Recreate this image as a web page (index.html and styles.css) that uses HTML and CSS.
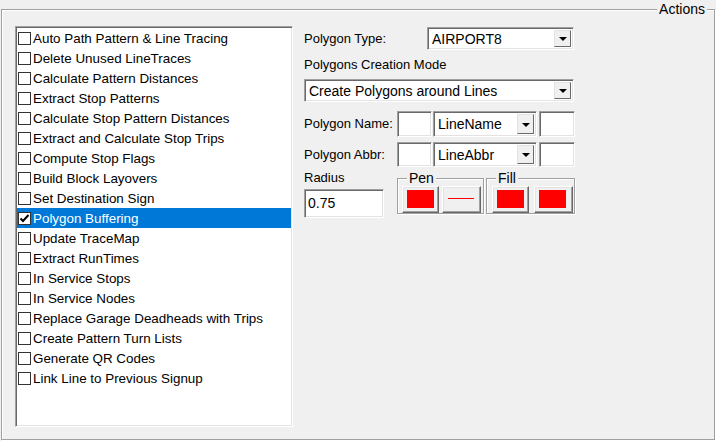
FILE: index.html
```
<!DOCTYPE html>
<html lang="en">
<head>
  <meta charset="UTF-8" />
  <title>Actions</title>
  <link rel="stylesheet" href="styles.css">
</head>
<body>

  <div class="group actions">
    <span class="group-title">Actions</span>

    <div class="listbox">
      <div class="item"><span class="check"></span>Auto Path Pattern &amp; Line Tracing</div>
      <div class="item"><span class="check"></span>Delete Unused LineTraces</div>
      <div class="item"><span class="check"></span>Calculate Pattern Distances</div>
      <div class="item"><span class="check"></span>Extract Stop Patterns</div>
      <div class="item"><span class="check"></span>Calculate Stop Pattern Distances</div>
      <div class="item"><span class="check"></span>Extract and Calculate Stop Trips</div>
      <div class="item"><span class="check"></span>Compute Stop Flags</div>
      <div class="item"><span class="check"></span>Build Block Layovers</div>
      <div class="item"><span class="check"></span>Set Destination Sign</div>
      <div class="item selected">
        <span class="check"><svg width="11" height="11" viewBox="0 0 11 11"><path d="M1.5 5.5 L4 8 L9.5 2" fill="none" stroke="#000" stroke-width="2"/></svg></span>Polygon Buffering
      </div>
      <div class="item"><span class="check"></span>Update TraceMap</div>
      <div class="item"><span class="check"></span>Extract RunTimes</div>
      <div class="item"><span class="check"></span>In Service Stops</div>
      <div class="item"><span class="check"></span>In Service Nodes</div>
      <div class="item"><span class="check"></span>Replace Garage Deadheads with Trips</div>
      <div class="item"><span class="check"></span>Create Pattern Turn Lists</div>
      <div class="item"><span class="check"></span>Generate QR Codes</div>
      <div class="item"><span class="check"></span>Link Line to Previous Signup</div>
    </div>

    <div class="panel">
      <div class="row-type">
        <span class="lbl">Polygon Type:</span>
        <div class="combo combo-type"><span class="combo-text">AIRPORT8</span><span class="combo-btn"></span></div>
      </div>

      <div class="lbl mode-lbl">Polygons Creation Mode</div>
      <div class="combo combo-mode"><span class="combo-text">Create Polygons around Lines</span><span class="combo-btn"></span></div>

      <div class="row-field first">
        <span class="lbl field-lbl">Polygon Name:</span>
        <div class="textbox tb-pre"></div>
        <div class="combo combo-field"><span class="combo-text">LineName</span><span class="combo-btn"></span></div>
        <div class="textbox tb-post"></div>
      </div>

      <div class="row-field second">
        <span class="lbl field-lbl">Polygon Abbr:</span>
        <div class="textbox tb-pre"></div>
        <div class="combo combo-field"><span class="combo-text">LineAbbr</span><span class="combo-btn"></span></div>
        <div class="textbox tb-post"></div>
      </div>

      <div class="row-style">
        <div class="radius">
          <div class="lbl">Radius</div>
          <div class="textbox tb-radius">0.75</div>
        </div>

        <div class="group mini pen">
          <span class="mini-title">Pen</span>
          <div class="swatch-btn"><span class="swatch"></span></div>
          <div class="swatch-btn wide line-btn"><span class="line"></span></div>
        </div>

        <div class="group mini fill">
          <span class="mini-title">Fill</span>
          <div class="swatch-btn"><span class="swatch"></span></div>
          <div class="swatch-btn wide"><span class="swatch"></span></div>
        </div>
      </div>
    </div>
  </div>

</body>
</html>
```

FILE: styles.css
```
:root {
  --face: #f0f0f0;
  --shadow: #a0a0a0;
  --dark: #696969;
  --light: #e3e3e3;
  --select: #0078d7;
}

html, body {
  margin: 0;
  background: var(--face);
}

body {
  width: 716px;
  height: 441px;
  overflow: hidden;
  font-family: 'Liberation Sans', Arial, sans-serif;
  font-size: 13px;
  color: #000;
}

/* etched group box */
.group {
  position: relative;
  box-sizing: border-box;
  border: 1px solid var(--shadow);
  box-shadow: inset 1px 1px 0 #fff, 1px 1px 0 #fff;
}

.actions {
  margin: 9px 1px 1px 1px;
  height: 431px;
  display: flex;
  align-items: flex-start;
  gap: 11px;
  padding: 16px 0 0 13px;
}

.group-title {
  position: absolute;
  top: -9px;
  right: 7px;
  padding: 0 2px;
  line-height: 16px;
  font-size: 14px;
  background: var(--face);
}

/* sunken controls */
.listbox, .combo, .textbox {
  box-sizing: border-box;
  background: #fff;
  border: 1px solid;
  border-color: var(--shadow) #fff #fff var(--shadow);
  box-shadow: inset 1px 1px 0 var(--dark), inset -1px -1px 0 var(--light);
}

.listbox {
  width: 278px;
  height: 401px;
  padding: 1px;
  font-size: 13.4px;
}

.item {
  height: 20px;
  display: flex;
  align-items: center;
  white-space: nowrap;
}

.item.selected {
  background: var(--select);
  color: #fff;
}

.check {
  width: 13px;
  height: 13px;
  box-sizing: border-box;
  border: 1px solid #333;
  background: #fff;
  margin: 1px 2px 0 1px;
  display: flex;
  align-items: center;
  justify-content: center;
}

.panel {
  width: 271px;
  display: flex;
  flex-direction: column;
  padding-top: 1px;
}

.lbl {
  line-height: 16px;
  white-space: nowrap;
}

.row-type {
  display: flex;
  align-items: center;
  height: 23px;
}

.combo {
  display: flex;
  align-items: center;
  padding: 2px;
}

.combo-text {
  flex: 1;
  padding-left: 2px;
  font-size: 14px;
}

.combo-btn {
  width: 17px;
  height: 100%;
  box-sizing: border-box;
  background: var(--face);
  border: 1px solid;
  border-color: var(--light) var(--dark) var(--dark) var(--light);
  display: flex;
  align-items: center;
  justify-content: center;
}

.combo-btn::after {
  content: '';
  border-top: 4px solid #000;
  border-left: 4px solid transparent;
  border-right: 4px solid transparent;
  margin-top: 1px;
}

.combo-type {
  width: 147px;
  height: 23px;
  margin-left: auto;
  margin-right: 1px;
}

.mode-lbl {
  margin-top: 7px;
  margin-bottom: 6px;
}

.combo-mode {
  width: 270px;
  height: 23px;
}

.row-field {
  display: flex;
  align-items: center;
}

.row-field.first {
  margin-top: 9px;
  height: 26px;
}

.row-field.second {
  margin-top: 5px;
  height: 25px;
}

.row-field > * {
  height: 100%;
}

.field-lbl {
  width: 93px;
  display: flex;
  align-items: center;
}

.tb-pre { width: 35px; }

.combo-field {
  width: 104px;
  margin-left: 1px;
}

.tb-post {
  width: 36px;
  margin-left: 2px;
}

.row-style {
  display: flex;
  align-items: flex-start;
  margin-top: 3px;
}

.radius {
  width: 93px;
}

.tb-radius {
  width: 80px;
  height: 29px;
  margin-top: 3px;
  padding: 3px 0 0 3px;
  font-size: 14px;
  line-height: 20px;
}

.mini {
  height: 36px;
  margin-top: 8px;
  display: flex;
  align-items: flex-start;
  gap: 3px;
  padding: 7px 0 0 4px;
}

.pen { width: 87px; }

.fill {
  width: 89px;
  margin-left: 2px;
  padding-left: 5px;
  gap: 5px;
}

.mini-title {
  position: absolute;
  top: -9px;
  left: 9px;
  padding: 0 2px;
  line-height: 16px;
  font-size: 14px;
  background: var(--face);
}

.swatch-btn {
  width: 37px;
  height: 27px;
  box-sizing: border-box;
  background: var(--face);
  border: 1px solid;
  border-color: #fff var(--dark) var(--dark) #fff;
  box-shadow: inset -1px -1px 0 var(--shadow), inset 1px 1px 0 var(--light);
  padding: 3px 0 0 4px;
}

.swatch-btn.wide { width: 39px; }

.swatch {
  display: block;
  width: 27px;
  height: 18px;
  background: #ff0000;
}

.line-btn {
  padding: 11px 0 0 5px;
}

.line {
  display: block;
  width: 26px;
  height: 1px;
  background: #ff0000;
}
```
